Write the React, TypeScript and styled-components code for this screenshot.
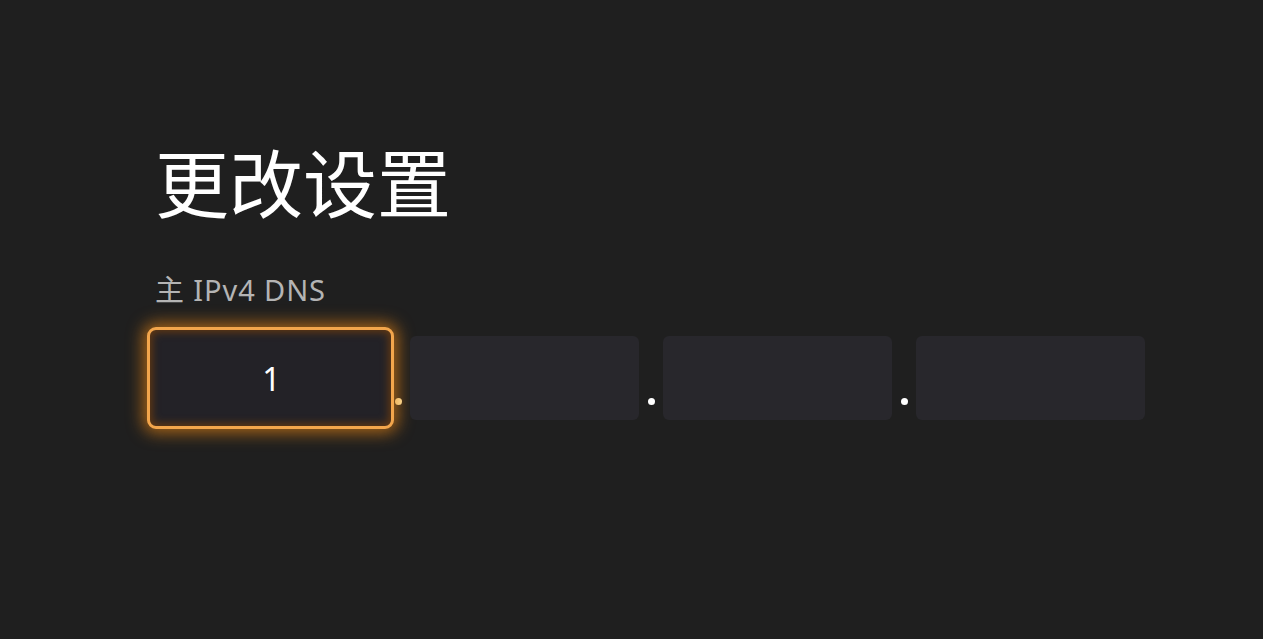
import { Fragment } from 'react';
import styled, { createGlobalStyle } from 'styled-components';

const GlobalStyle = createGlobalStyle`
  html, body {
    margin: 0;
    padding: 0;
    background: #1f1f1f;
  }
  body {
    font-family: 'Noto Sans', 'Noto Sans CJK SC', sans-serif;
  }
`;

const Page = styled.div`
  width: 1263px;
  height: 639px;
  box-sizing: border-box;
  padding: 130px 0 0 155px;
  background: #1f1f1f;
  display: flex;
  flex-direction: column;
  overflow: hidden;
`;

const Title = styled.h1`
  margin: 0;
  font-family: 'Noto Sans CJK SC', sans-serif;
  font-weight: 400;
  font-size: 74px;
  line-height: 100px;
  color: #ffffff;
`;

const FieldLabel = styled.div`
  margin-top: 42px;
  font-family: 'Noto Sans', 'Noto Sans CJK SC', sans-serif;
  font-size: 29px;
  line-height: 36px;
  letter-spacing: 0.9px;
  color: #b4b4b4;
`;

const IpRow = styled.div`
  display: flex;
  align-items: stretch;
  margin-top: 28px;
  margin-left: 2px;
`;

const Octet = styled.div<{ $focused?: boolean }>`
  position: relative;
  width: 229px;
  height: 84px;
  display: flex;
  align-items: center;
  justify-content: center;
  border-radius: 6px;
  background: #28272c;
  font-family: 'Noto Sans', sans-serif;
  font-size: 32px;
  color: #ffffff;

  ${({ $focused }) =>
    $focused &&
    `
    background: transparent;
    &::before {
      content: '';
      position: absolute;
      inset: -9px -8px -9px -10px;
      border: 3px solid #f3a64c;
      border-radius: 9px;
      background: #232227;
      box-shadow: 0 0 16px 4px rgba(222, 128, 20, 0.7),
        inset 0 0 8px 2px rgba(150, 75, 0, 0.6);
    }
  `}
`;

const OctetValue = styled.span`
  position: relative;
  z-index: 1;
`;

const Dot = styled.div<{ $warm?: boolean }>`
  width: 24px;
  display: flex;
  align-items: flex-end;
  justify-content: center;
  padding-bottom: 15px;
  box-sizing: border-box;

  &::after {
    content: '';
    width: 7px;
    height: 7px;
    border-radius: 50%;
    background: ${({ $warm }) => ($warm ? '#ffe8a8' : '#ffffff')};
  }
`;

const octets = ['1', '', '', ''];

export default function App() {
  return (
    <>
      <GlobalStyle />
      <Page>
        <Title>更改设置</Title>
        <FieldLabel>主 IPv4 DNS</FieldLabel>
        <IpRow>
          {octets.map((v, i) => (
            <Fragment key={i}>
              {i > 0 && <Dot $warm={i === 1} />}
              <Octet $focused={i === 0}>
                <OctetValue>{v}</OctetValue>
              </Octet>
            </Fragment>
          ))}
        </IpRow>
      </Page>
    </>
  );
}
